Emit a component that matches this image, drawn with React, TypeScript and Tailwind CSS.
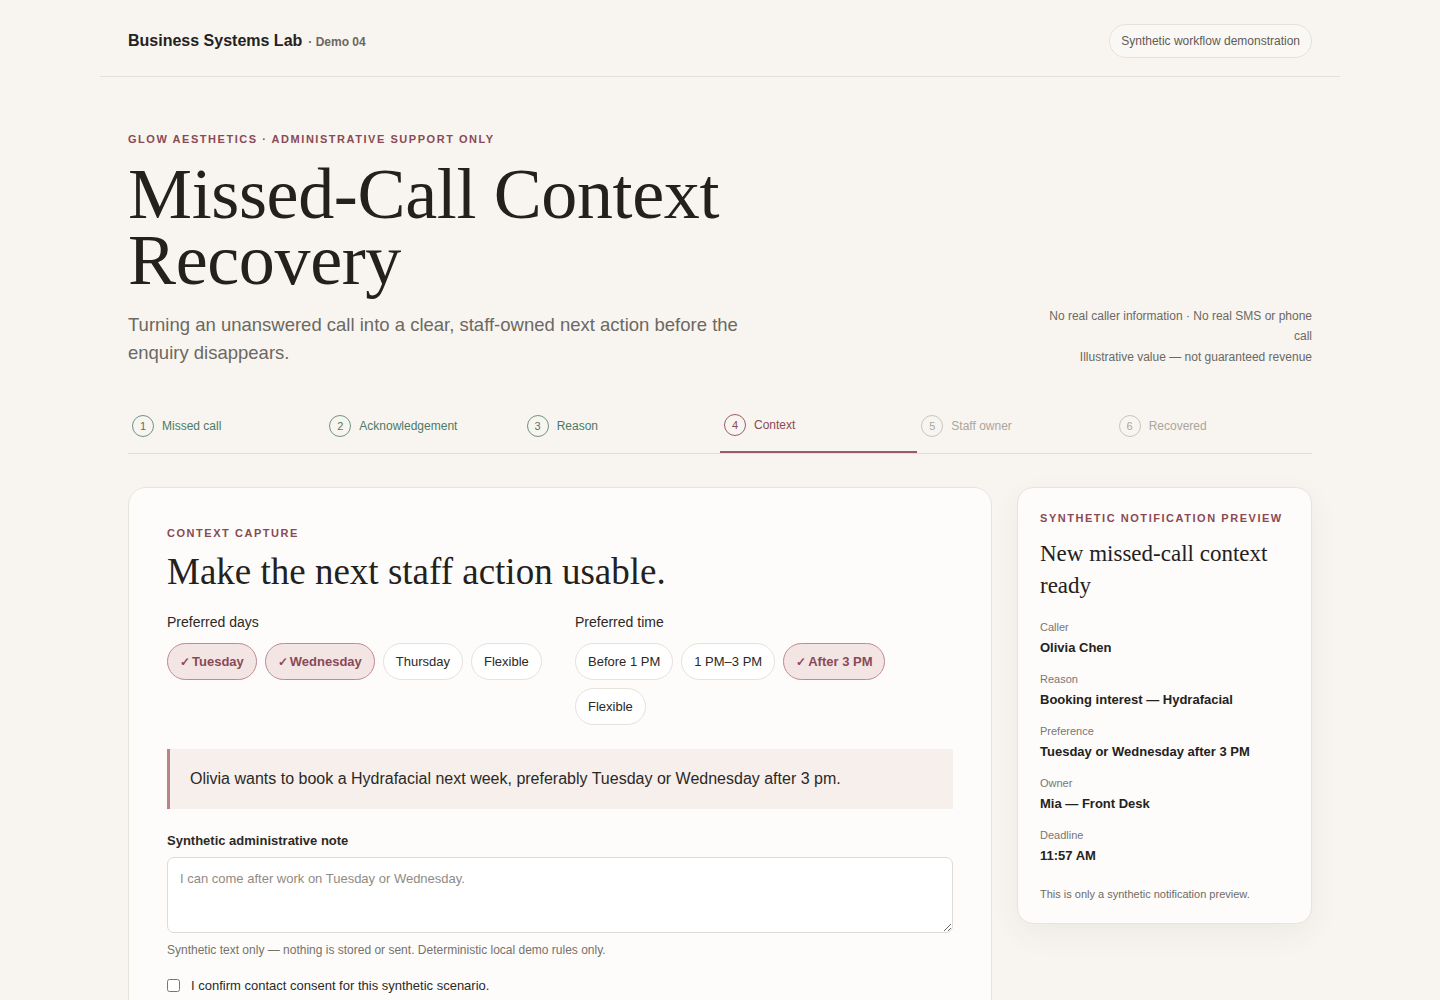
import React, { useState } from 'react';

const sans = "font-['Liberation_Sans',Arial,sans-serif]";
const serif = "font-['Liberation_Serif',Georgia,serif]";

const STEPS = [
  { n: 1, label: 'Missed call', state: 'done' },
  { n: 2, label: 'Acknowledgement', state: 'done' },
  { n: 3, label: 'Reason', state: 'done' },
  { n: 4, label: 'Context', state: 'active' },
  { n: 5, label: 'Staff owner', state: 'todo' },
  { n: 6, label: 'Recovered', state: 'todo' },
];

const STEP_STYLE: Record<string, { text: string; ring: string }> = {
  done: { text: 'text-[#4d7a62]', ring: 'border-[#6f9481]' },
  active: { text: 'text-[#8a4a55]', ring: 'border-[#9a6068]' },
  todo: { text: 'text-[#aaa59e]', ring: 'border-[#c9c4bd]' },
};

const Chip: React.FC<{ label: string; selected: boolean; onClick: () => void }> = ({ label, selected, onClick }) => (
  <button
    onClick={onClick}
    className={`h-[37px] px-3 rounded-full border text-[13px] leading-none flex items-center ${
      selected
        ? 'bg-[#f4e5e5] border-[#c08a8f] text-[#8a4a55] font-bold'
        : 'bg-white border-[#e6e1db] text-[#2b2926]'
    }`}
  >
    {selected && <span className="text-[12px] font-bold mr-[2px]">✓</span>}
    {label}
  </button>
);

const Field: React.FC<{ label: string; value: string }> = ({ label, value }) => (
  <div>
    <div className="text-[11px] text-[#777] leading-4">{label}</div>
    <div className="mt-[3px] text-[13px] font-bold text-[#242220] leading-5">{value}</div>
  </div>
);

export default function App() {
  const [days, setDays] = useState<string[]>(['Tuesday', 'Wednesday']);
  const [time, setTime] = useState<string>('After 3 PM');
  const [consent, setConsent] = useState(false);

  const toggleDay = (d: string) =>
    setDays((cur) => (cur.includes(d) ? cur.filter((x) => x !== d) : [...cur, d]));

  return (
    <div className={`min-h-screen bg-[#f8f5f0] text-[#262421] ${sans}`}>
      <header className="max-w-[1240px] mx-auto px-7 h-[77px] pt-[5px] flex items-center justify-between border-b border-[#e4dfd8]">
        <div className="flex items-baseline gap-1.5">
          <span className="text-[16px] font-bold text-[#24221f]">Business Systems Lab</span>
          <span className="text-[12px] font-bold text-[#6b6761]">· Demo 04</span>
        </div>
        <div className="h-[34px] px-[11px] flex items-center rounded-full border border-[#e6e1da] bg-[#faf8f4] text-[12px] text-[#5f5b55]">
          Synthetic workflow demonstration
        </div>
      </header>

      <main className="max-w-[1184px] mx-auto pt-[54px] pb-10">
        <div className="text-[11px] font-bold tracking-[0.14em] text-[#8a4a55] leading-4">
          GLOW AESTHETICS · ADMINISTRATIVE SUPPORT ONLY
        </div>
        <div className="flex items-end justify-between">
          <div>
            <h1 className={`${serif} mt-[14px] text-[72px] leading-[66px] text-[#24211d] tracking-[-0.005em]`}>
              Missed-Call Context
              <br />
              Recovery
            </h1>
            <p className="mt-[18px] w-[640px] text-[18.5px] leading-[28px] text-[#6c6862]">
              Turning an unanswered call into a clear, staff-owned next action before the enquiry disappears.
            </p>
          </div>
          <div className="w-[270px] text-right text-[12px] leading-[20.5px] text-[#6c6862]">
            No real caller information · No real SMS or phone call
            <br />
            Illustrative value — not guaranteed revenue
          </div>
        </div>

        <nav className="mt-[38px] grid grid-cols-6 border-b border-[#e2ddd6]">
          {STEPS.map((s) => {
            const st = STEP_STYLE[s.state];
            return (
              <div
                key={s.n}
                className={`h-[48px] pb-[6px] flex items-center gap-2 pl-1 ${
                  s.state === 'active' ? 'border-b-2 border-[#9a5c62] -mb-px' : ''
                } ${st.text}`}
              >
                <span
                  className={`w-[22px] h-[22px] rounded-full border ${st.ring} flex items-center justify-center text-[11px]`}
                >
                  {s.n}
                </span>
                <span className="text-[12px]">{s.label}</span>
              </div>
            );
          })}
        </nav>

        <div className="mt-[33px] grid grid-cols-[864px_1fr] gap-[25px] items-start">
          <section className="bg-[#fdfcfa] border border-[#e8e3dc] rounded-[18px] px-[38px] pt-[37px] pb-10">
            <div className="text-[11px] font-bold tracking-[0.14em] text-[#8a4a55] leading-4">CONTEXT CAPTURE</div>
            <h2 className={`${serif} mt-[9px] text-[37px] leading-[44px] text-[#24211d]`}>
              Make the next staff action usable.
            </h2>

            <div className="mt-[18px] grid grid-cols-2 gap-[30px]">
              <div>
                <div className="text-[14px] leading-5 text-[#2b2926]">Preferred days</div>
                <div className="mt-[11px] flex flex-wrap gap-2">
                  {['Tuesday', 'Wednesday', 'Thursday', 'Flexible'].map((d) => (
                    <Chip key={d} label={d} selected={days.includes(d)} onClick={() => toggleDay(d)} />
                  ))}
                </div>
              </div>
              <div>
                <div className="text-[14px] leading-5 text-[#2b2926]">Preferred time</div>
                <div className="mt-[11px] flex flex-wrap gap-x-[8px] gap-y-2">
                  {['Before 1 PM', '1 PM–3 PM', 'After 3 PM', 'Flexible'].map((t) => (
                    <Chip key={t} label={t} selected={time === t} onClick={() => setTime(t)} />
                  ))}
                </div>
              </div>
            </div>

            <div className="mt-[24px] border-l-[3px] border-[#b98488] bg-[#f6efec] h-[60px] pl-[20px] flex items-center text-[16px] text-[#2b2926]">
              Olivia wants to book a Hydrafacial next week, preferably Tuesday or Wednesday after 3 pm.
            </div>

            <label className="block mt-[22px] text-[13px] font-bold text-[#2b2926] leading-5">
              Synthetic administrative note
            </label>
            <textarea
              placeholder="I can come after work on Tuesday or Wednesday."
              className="mt-[6px] block w-full h-[76px] rounded-[7px] border border-[#dedad4] bg-white px-3 py-[11px] text-[13px] leading-5 placeholder:text-[#8f8b85] outline-none"
            />
            <div className="mt-[7px] text-[12px] text-[#76726c] leading-5">
              Synthetic text only — nothing is stored or sent. Deterministic local demo rules only.
            </div>
            <label className="mt-[16px] flex items-center gap-[11px] text-[13px] text-[#2b2926]">
              <input
                type="checkbox"
                checked={consent}
                onChange={(e) => setConsent(e.target.checked)}
                className="w-[13px] h-[13px] accent-[#8a4a55]"
              />
              I confirm contact consent for this synthetic scenario.
            </label>
          </section>

          <aside className="bg-[#fdfcfa] border border-[#e8e3dc] rounded-[16px] px-[22px] pt-[22px] pb-[21px] shadow-[0_10px_30px_rgba(60,40,20,0.06)]">
            <div className="text-[11px] font-bold tracking-[0.14em] text-[#8a4a55] leading-4 whitespace-nowrap">
              SYNTHETIC NOTIFICATION PREVIEW
            </div>
            <h3 className={`${serif} mt-[12px] text-[23px] leading-[32px] text-[#24211d]`}>
              New missed-call context ready
            </h3>
            <div className="mt-[17px] flex flex-col gap-[13px]">
              <Field label="Caller" value="Olivia Chen" />
              <Field label="Reason" value="Booking interest — Hydrafacial" />
              <Field label="Preference" value="Tuesday or Wednesday after 3 PM" />
              <Field label="Owner" value="Mia — Front Desk" />
              <Field label="Deadline" value="11:57 AM" />
            </div>
            <div className="mt-[20px] text-[11px] text-[#6f6b65] leading-4">This is only a synthetic notification preview.</div>
          </aside>
        </div>
      </main>
    </div>
  );
}
